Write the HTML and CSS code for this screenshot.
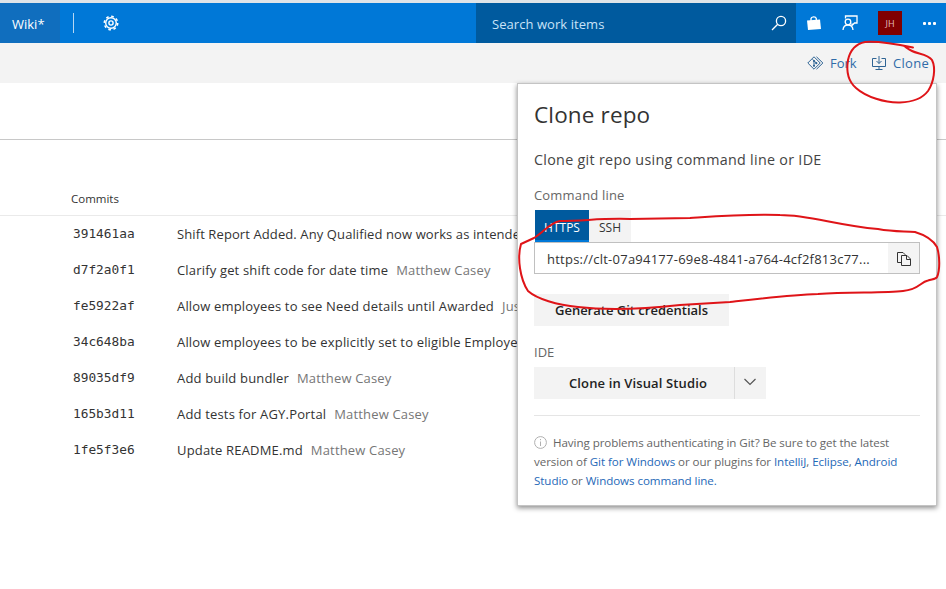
FILE: index.html
```html
<!DOCTYPE html>
<html lang="en">
<head>
<meta charset="utf-8">
<title>Commits</title>
<link rel="stylesheet" href="styles.css">
</head>
<body>
<div class="page">
  <header class="topbar">
    <a class="hub"><span class="t-wiki">Wiki*</span></a>
    <span class="divider"></span>
    <svg class="gear" width="16" height="16" viewBox="0 0 16 16" fill="none" stroke="#fff" stroke-width="1.4"><circle cx="8" cy="8" r="5.3"/><circle cx="8" cy="8" r="2.1"/><circle cx="8" cy="8" r="6.7" stroke-width="1.6" stroke-dasharray="2.63 2.63"/></svg>
    <div class="search">
      <span class="t-search">Search work items</span>
      <svg width="16" height="16" viewBox="0 0 16 16" fill="none" stroke="#fff" stroke-width="1.3"><circle cx="10" cy="6" r="4.6"/><path d="M6.7 9.3 1 15"/></svg>
    </div>
    <svg class="bag" width="14" height="14" viewBox="0 0 14 14"><path d="M0 4.5 13 3.5 14 13 1 14Z" fill="#fff"/><path d="M4 5V2.5Q4.3 1 6.5.8T9.3 2.5V4" fill="none" stroke="#fff" stroke-width="1.3"/></svg>
    <svg class="feedback" width="16" height="16" viewBox="0 0 16 16" fill="none" stroke="#fff" stroke-width="1.3"><path d="M3.5 3.5V1H15V8H12.5L10 10.5V8.5"/><circle cx="6" cy="7" r="2.8"/><path d="M1 15Q1.3 10 6 10T11 15"/></svg>
    <span class="avatar">JH</span>
    <span class="more"><i></i><i></i><i></i></span>
  </header>
  <nav class="toolbar">
    <a class="tool fork"><svg width="17" height="14" viewBox="0 0 17 14" fill="none" stroke="#2f6494" stroke-width="1"><path d="M7 .8 13.2 7 7 13.2.8 7ZM9.5.8 15.9 7 9.5 13.2M5.5 3.2 9.5 7.2M7 4.8V10"/><g fill="#2f6494" stroke="none"><circle cx="7" cy="5" r="1.1"/><circle cx="9.3" cy="7.2" r="1.1"/><circle cx="7" cy="9.8" r="1.1"/></g></svg><span class="t-fork">Fork</span></a>
    <a class="tool clone"><svg width="14" height="14" viewBox="0 0 14 14" fill="none" stroke="#2f6494" stroke-width="1"><path d="M4.5 2.5H.5V10.500H13.500V2.500H9.500M7 0V7.500M4.500 5 7 7.500 9.500 5M7 10.500V13M3.500 13.500H10.500"/></svg><span class="t-clone">Clone</span></a>
  </nav>
  <div class="filters"></div>
  <div class="list-head"><span class="t-commits">Commits</span></div>
  <main class="commits">
    <div class="row"><code>391461aa</code><span class="msg tight">Shift Report Added. Any Qualified now works as intended</span></div>
    <div class="row"><code>d7f2a0f1</code><span class="msg">Clarify get shift code for date time</span><span class="author">Matthew Casey</span></div>
    <div class="row"><code>fe5922af</code><span class="msg">Allow employees to see Need details until Awarded</span><span class="author">Justin</span></div>
    <div class="row"><code>34c648ba</code><span class="msg">Allow employees to be explicitly set to eligible Employees</span></div>
    <div class="row"><code>89035df9</code><span class="msg">Add build bundler</span><span class="author">Matthew Casey</span></div>
    <div class="row"><code>165b3d11</code><span class="msg">Add tests for AGY.Portal</span><span class="author">Matthew Casey</span></div>
    <div class="row"><code>1fe5f3e6</code><span class="msg">Update README.md</span><span class="author">Matthew Casey</span></div>
  </main>

  <section class="popup">
    <h1>Clone repo</h1>
    <p class="sub">Clone git repo using command line or IDE</p>
    <div class="label cmd">Command line</div>
    <div class="tabs"><span class="tab on">HTTPS</span><span class="tab">SSH</span></div>
    <div class="url"><span class="address">https://clt-07a94177-69e8-4841-a764-4cf2f813c77...</span>
      <span class="copy"><svg width="14" height="14" viewBox="0 0 14 14" fill="none" stroke="#333" stroke-width="1"><path d="M4.500 10.500H.500V.500H6L8 2.500V3.500M4.500 3.500H10L13.500 7V13.500H4.500ZM9.500 3.500V7.500H13.500"/></svg></span></div>
    <div class="button gen">Generate Git credentials</div>
    <div class="label ide">IDE</div>
    <div class="split"><span class="button vs">Clone in Visual Studio</span><span class="button arrow"><svg width="12" height="8" viewBox="0 0 12 8" fill="none" stroke="#555" stroke-width="1.200"><path d="M.5 1 6 6.500 11.500 1"/></svg></span></div>
    <div class="help">
      <div class="line"><svg width="13" height="13" viewBox="0 0 13 13" fill="none" stroke="#b0b0b0"><circle cx="6.500" cy="6.500" r="5.900"/><path d="M6.500 5.500V10M6.500 3V4.200"/></svg><span>Having problems authenticating in Git? Be sure to get the latest</span></div>
      <div class="line"><span>version of <a>Git for Windows</a> or our plugins for <a>IntelliJ</a>, <a>Eclipse</a>, <a>Android</a></span></div>
      <div class="line"><span><a>Studio</a> or <a>Windows command line.</a></span></div>
    </div>
  </section>

  <svg class="ink" width="946" height="589" viewBox="0 0 946 589" fill="none" stroke="#df1418" stroke-width="2" stroke-linecap="round" stroke-linejoin="round">
    <path d="M913 47.500C901 45 880 41 865 42C855 44 850 51 848 60C846 72 849 82 856 88C866 97 885 103 900 102.500C913 102 922 99 928 91C934 82 936 68 932 60C928 54 918 54 912 51C908 49 907 48 904 46"/>
    <path d="M534 238L521 244C517 258 520 279 528 291C537 299 557 305 578 307C605 310 643 309 680 305L730 302C765 298 790 295 818 294C850 292 885 293 903 291C920 289 920 282 928 280.500C933 279 936 279 937 277C940 270 940 257 937 247C933 240 925 235 915 232C904 231 894 232 878 229C835 225 810 215 780 215C745 214 720 216 690 218L630 219C600 218 585 221 560 221C549 223 543 233 534 238Z"/>
  </svg>
</div>
</body>
</html>
```
FILE: styles.css
```css
* { box-sizing: border-box; }
body { margin: 0; background: #fff; color: #333; font-family: "Open Sans", "Noto Sans", sans-serif; font-size: 13px; }
.page { position: relative; width: 946px; height: 589px; overflow: hidden; }
.page span, .page a { white-space: nowrap; }
svg { display: block; flex: none; }

.topbar { display: flex; align-items: center; height: 43px; border-top: 3px solid #dfe4e8; background: #0078d7; color: #fff; }
.hub { display: flex; align-items: center; width: 60px; height: 40px; padding: 2px 0 0 12px; background: #106ebe; }
.divider { width: 1px; height: 20px; margin-left: 13px; background: #b5d7f3; }
.gear { margin-left: 29px; }
.search { display: flex; align-items: center; justify-content: space-between; width: 320px; height: 40px; margin-left: 357px; padding: 0 9px 0 16px; background: #005a9e; color: #c9e3f8; }
.t-search { padding-top: 2px; letter-spacing: .06px; }
.bag { margin-left: 11px; }
.feedback { margin-left: 21px; margin-right: 20px; }
.avatar { display: flex; align-items: center; justify-content: center; width: 24px; height: 24px; background: #800000; color: #e4bcbc; font-size: 9px; }
.more { display: flex; gap: 2px; margin-left: 21px; }
.more i { width: 3px; height: 3px; border-radius: 1px; background: #fff; }

.toolbar { display: flex; align-items: center; height: 40px; padding-left: 807px; background: #f3f3f3; color: #2f6ba8; }
.tool { display: flex; align-items: center; }
.fork { width: 65px; gap: 6px; }
.clone { gap: 7px; letter-spacing: .3px; }
.filters { height: 57px; border-bottom: 1px solid #c8c8c8; }
.list-head { display: flex; height: 76px; padding: 50px 0 0 71px; border-bottom: 1px solid #eaeaea; font-size: 11.5px; line-height: 18px; }
.row { display: flex; align-items: center; height: 36px; padding-left: 73px; }
code { width: 104px; font: 12.8px "DejaVu Sans Mono", monospace; color: #333; padding-bottom: 1px; }
.msg { letter-spacing: .17px; }
.msg.tight { letter-spacing: .1px; }
.author { margin-left: 8px; color: #767676; letter-spacing: .16px; }

.popup { position: absolute; left: 517px; top: 83px; width: 420px; height: 423px; padding: 0 16px; border: 1px solid #c4c4c4; background: #fff; box-shadow: 0 2px 5px rgba(0,0,0,.45); }
h1 { margin: 15px 0 0; font-size: 22.5px; line-height: 32px; font-weight: 400; letter-spacing: .15px; }
.sub { margin: 19px 0 0; font-size: 14.3px; line-height: 20px; letter-spacing: .3px; color: #444; }
.label { color: #666; line-height: 20px; }
.cmd { margin-top: 15px; letter-spacing: .18px; }
.tabs { display: flex; height: 32px; margin: 5px 0 0 1px; font-size: 12px; }
.tab { display: flex; align-items: center; justify-content: center; width: 42px; padding-top: 2px; background: #f3f3f3; }
.tab.on { width: 54px; padding-top: 4px; background: #005a9e; border-bottom: 2px solid #0078d7; color: #fff; }
.url { display: flex; align-items: center; justify-content: space-between; height: 32px; padding-left: 12px; border: 1px solid #c0c0c0; }
.address { padding-top: 1px; letter-spacing: .24px; }
.copy { display: flex; align-items: center; justify-content: center; width: 31px; height: 30px; padding-top: 2px; background: #f4f4f4; }
.button { display: flex; align-items: center; justify-content: center; height: 32px; background: #f3f3f3; color: #222; font-weight: 600; }
.gen { width: 195px; margin-top: 20px; }
.ide { margin-top: 16px; }
.split { display: flex; margin-top: 5px; }
.vs { width: 200px; padding-left: 8px; letter-spacing: .13px; }
.arrow { width: 32px; padding: 0 2px 2px 0; border-left: 1px solid #ddd; }
.help { margin-top: 16px; padding-top: 17px; border-top: 1px solid #e5e5e5; color: #666; font-size: 11.6px; letter-spacing: -.07px; }
.help a { color: #1f69b8; }
.line { display: flex; align-items: center; gap: 6px; height: 19px; }
.ink { position: absolute; left: 0; top: 0; }
```
